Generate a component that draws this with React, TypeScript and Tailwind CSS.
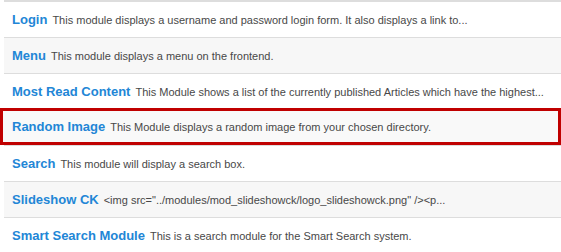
import React from "react";

interface ModuleItem {
  title: string;
  description: string;
}

const modules: ModuleItem[] = [
  { title: "Login", description: "This module displays a username and password login form. It also displays a link to..." },
  { title: "Menu", description: "This module displays a menu on the frontend." },
  { title: "Most Read Content", description: "This Module shows a list of the currently published Articles which have the highest..." },
  { title: "Random Image", description: "This Module displays a random image from your chosen directory." },
  { title: "Search", description: "This module will display a search box." },
  { title: "Slideshow CK", description: '<img src="../modules/mod_slideshowck/logo_slideshowck.png" /><p...' },
  { title: "Smart Search Module", description: "This is a search module for the Smart Search system." },
];

export default function App() {
  return (
    <div className="w-[561px] h-[252px] overflow-hidden bg-white font-['Liberation_Sans',Arial,sans-serif]">
      <ul className="flex flex-col">
        {modules.map((m, i) => {
          const selected = m.title === "Random Image";
          const striped = i % 2 === 1;
          if (selected) {
            return (
              <li
                key={m.title}
                className="-mt-px h-[37px] border-[3px] border-[#c00000] bg-[#f9f9f9] pl-[9px] pt-px flex items-center whitespace-nowrap"
              >
                <span className="text-[13px] font-bold text-[#2286d6] mr-[5px]">{m.title}</span>
                <span className="text-[11px] text-[#484848]">{m.description}</span>
              </li>
            );
          }
          return (
            <li
              key={m.title}
              className={`ml-[4px] ${i === 0 ? "h-[37px] border-t-2" : "h-[36px] border-t"} border-[#dddddd] pl-[8px] pt-px flex items-center whitespace-nowrap ${
                striped ? "bg-[#f7f7f7]" : "bg-white"
              }`}
            >
              <span className="text-[13px] font-bold text-[#2286d6] mr-[5px]">{m.title}</span>
              <span className="text-[11px] text-[#484848]">{m.description}</span>
            </li>
          );
        })}
      </ul>
    </div>
  );
}
